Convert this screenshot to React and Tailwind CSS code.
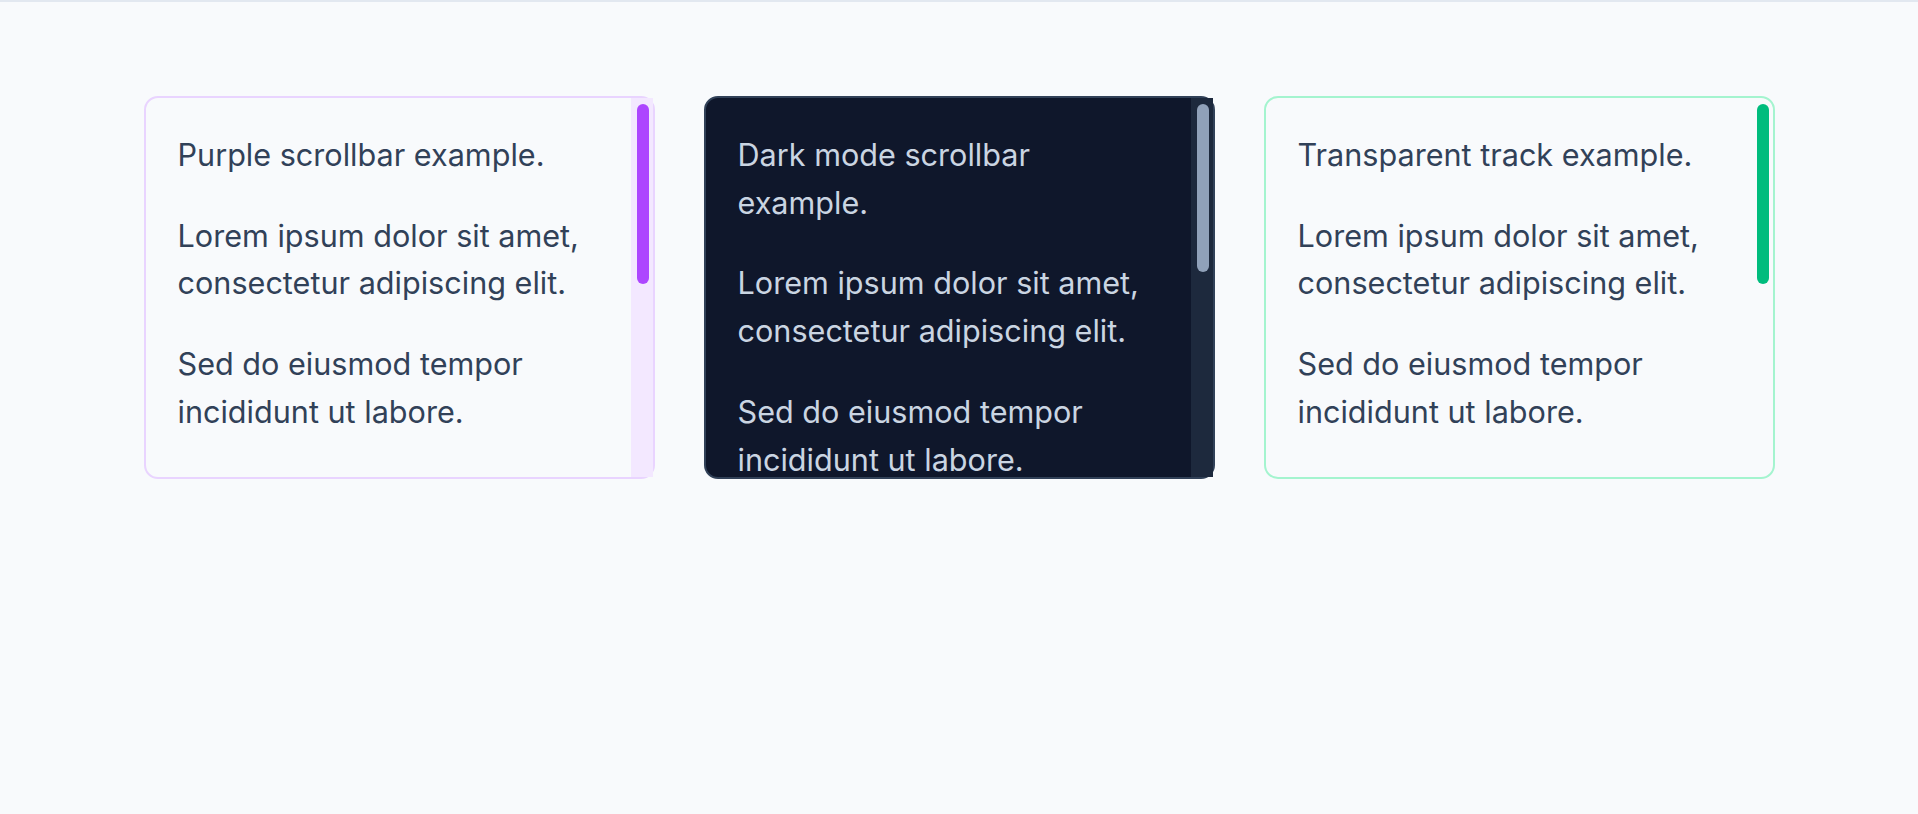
const paragraphs = [
  "Lorem ipsum dolor sit amet, consectetur adipiscing elit.",
  "Sed do eiusmod tempor incididunt ut labore.",
];

function ScrollCard({ title, card, text, track, thumb, thumbHeight }) {
  return (
    <div className={`flex h-[383px] rounded-[14px] border-2 ${card}`}>
      <div className="min-w-0 flex-1 overflow-hidden pt-[33px] pl-[32px] pr-[33px]">
        <div className={`flex flex-col gap-[33px] text-[30.6px] leading-[47.7px] ${text}`}>
          <p>{title}</p>
          {paragraphs.map((p) => (
            <p key={p}>{p}</p>
          ))}
        </div>
      </div>
      <div className={`w-[22px] shrink-0 pt-[6px] pl-[6px] pr-[4px] ${track}`}>
        <div className={`rounded-full ${thumb}`} style={{ height: thumbHeight }} />
      </div>
    </div>
  );
}

export default function App() {
  return (
    <div className="min-h-screen border-t-2 border-slate-200 bg-slate-50 font-['Inter','Noto_Sans',sans-serif]">
      <div className="mx-auto grid w-[1631px] grid-cols-3 gap-[49px] pt-[94px]">
        <ScrollCard
          title="Purple scrollbar example."
          card="border-purple-200"
          text="text-slate-700"
          track="bg-purple-100"
          thumb="bg-purple-500"
          thumbHeight={180}
        />
        <ScrollCard
          title="Dark mode scrollbar example."
          card="border-slate-700 bg-slate-900"
          text="text-slate-300"
          track="bg-slate-800"
          thumb="bg-slate-400"
          thumbHeight={168}
        />
        <ScrollCard
          title="Transparent track example."
          card="border-emerald-200"
          text="text-slate-700"
          track="bg-transparent"
          thumb="bg-emerald-500"
          thumbHeight={180}
        />
      </div>
    </div>
  );
}
